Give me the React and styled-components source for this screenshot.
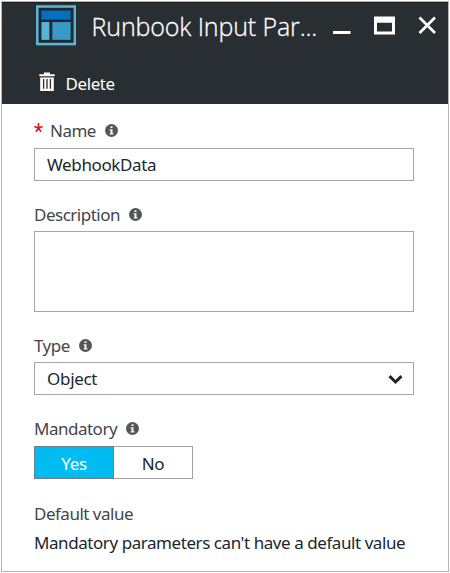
import React from "react";
import styled, { createGlobalStyle } from "styled-components";

const GlobalStyle = createGlobalStyle`
  * { box-sizing: border-box; }
  body { margin: 0; background: #fff; font-family: "Noto Sans", "Open Sans", sans-serif; }
`;

const Blade = styled.main`
  width: 448px;
  height: 571px;
  margin: 1px;
  border: 1px solid #b4b5b6;
  background: #fff;
`;

const Header = styled.header`
  height: 102px;
  background: #292e32;
  border-top: 1px solid #1b1f22;
  color: #fff;
`;

const TitleBar = styled.div`
  display: flex;
  height: 54px;
  padding: 2px 8px 0 33.5px;
`;

const Title = styled.h1`
  width: 243px;
  margin: 1px 0 0 15.5px;
  font: 300 25px/40px "Open Sans", sans-serif;
  letter-spacing: ${(p) => p.$spacing}px;
  -webkit-text-stroke: 0.3px #fff;
  white-space: nowrap;
`;

const Controls = styled.div`
  display: flex;
  padding-top: 9px;
`;

const Toolbar = styled.div`
  display: flex;
  padding: 15px 0 0 37px;
`;

const Text = styled.span`
  font-size: ${(p) => p.$size || 17}px;
  line-height: 24px;
  letter-spacing: ${(p) => p.$spacing ?? -0.5}px;
  color: ${(p) => p.$color || "#434649"};
  white-space: nowrap;
`;

const ToolbarButton = styled.div`
  display: flex;
  gap: 10.5px;
`;

const Form = styled.div`
  padding: 15px 0 0 32px;
`;

const Field = styled.section`
  height: ${(p) => p.$height}px;
`;

const Label = styled.div`
  display: flex;
  height: ${(p) => p.$height || 29}px;
`;

const Required = styled.svg`
  width: 9px;
  height: 10px;
  margin: 4px 7px 0 0;
`;

const Box = styled.div`
  display: flex;
  justify-content: space-between;
  width: 380px;
  height: ${(p) => p.$height || 33}px;
  padding: 4px 12px 0;
  border: 1px solid #a5a6a7;
`;

const Toggle = styled.div`
  display: flex;
  width: 159px;
  height: 33px;
  border: 1px solid #a0a1a2;
`;

const Choice = styled.div`
  flex: 1;
  padding-top: 5px;
  text-align: center;
  background: ${(p) => (p.$active ? "#00bcf2" : "#fff")};
  ${(p) => p.$active && "margin: -1px 0 -1px -1px; border: 1px solid #6d7f87;"}
`;

const InfoSvg = styled.svg`
  width: 13px;
  height: 13px;
  margin: 5px 0 0 9px;
  flex: none;
`;

const Info = () => (
  <InfoSvg viewBox="0 0 13 13">
    <circle cx="6.5" cy="6.5" r="6.5" fill="#53575b" />
    <path d="M5.5 2.3h2v1.8h-2zM4.7 5.3h2.8v4h.9v1.2H4.7V9.3h.8V6.4h-.8z" fill="#f5f5f5" />
  </InfoSvg>
);

const RunbookIcon = () => (
  <svg width="41" height="41" viewBox="0 0 41 41">
    <rect x="1.3" y="1.3" width="38" height="38" fill="#23292e" stroke="#59b4d9" strokeWidth="2.6" />
    <rect x="5.5" y="5.5" width="29.5" height="9" fill="#0072c6" />
    <rect x="5.5" y="17" width="8" height="18" fill="#59b4d9" />
    <rect x="16.5" y="17" width="18.5" height="18" fill="#3999c6" />
  </svg>
);

const TrashIcon = () => (
  <svg width="16" height="20" viewBox="0 0 16 20">
    <path d="M.3 2.2h4.6V.6h6v1.6h4.8v2.1H.3zM1.2 5.4h13.6V19H1.2z" fill="#fff" />
    <path d="M4.6 7v9.8M8 7v9.8M11.4 7v9.8" stroke="#292e32" strokeWidth="1.3" />
  </svg>
);

const WindowIcons = () => (
  <svg width="108" height="24" viewBox="0 0 108 24">
    <path d="M1 18.5h17.5" stroke="#fff" strokeWidth="3" />
    <path fillRule="evenodd" d="M42 2.5h21v18H42zM45 8.7v8.8h15V8.7z" fill="#fff" />
    <path d="M87.5 3.5l15.5 15.5M103 3.5L87.5 19" stroke="#fff" strokeWidth="2.7" />
  </svg>
);

const Chevron = styled.svg`
  width: 15px;
  height: 11px;
  margin: 7px -2px 0 0;
`;

export default function App() {
  return (
    <>
      <GlobalStyle />
      <Blade>
        <Header>
          <TitleBar>
            <RunbookIcon />
            <Title $spacing={-0.13}>Runbook Input Par...</Title>
            <Controls><WindowIcons /></Controls>
          </TitleBar>
          <Toolbar>
            <ToolbarButton>
              <TrashIcon />
              <Text $color="#fff" $spacing={-0.4}>Delete</Text>
            </ToolbarButton>
          </Toolbar>
        </Header>
        <Form>
          <Field $height={84}>
            <Label>
              <Required viewBox="0 0 8 9">
                <path d="M4 0v4.5M4 4.5L.3 3.2M4 4.5l3.7-1.3M4 4.5L1.7 8M4 4.5L6.3 8" stroke="#e81123" strokeWidth="1.5" />
              </Required>
              <Text>Name</Text>
              <Info />
            </Label>
            <Box><Text $color="#20262d" $spacing={-0.37}>WebhookData</Text></Box>
          </Field>
          <Field $height={131}>
            <Label $height={28}><Text>Description</Text><Info /></Label>
            <Box $height={81} />
          </Field>
          <Field $height={83}>
            <Label $height={28}><Text>Type</Text><Info /></Label>
            <Box>
              <Text $color="#20262d" $spacing={-0.3}>Object</Text>
              <Chevron viewBox="0 0 15 11">
                <path d="M1.5 2.2l6 5.8 6-5.8" fill="none" stroke="#20262d" strokeWidth="3" />
              </Chevron>
            </Box>
          </Field>
          <Field $height={85}>
            <Label><Text>Mandatory</Text><Info /></Label>
            <Toggle>
              <Choice $active><Text $color="#fff" $spacing={-0.3}>Yes</Text></Choice>
              <Choice><Text $color="#20262d" $spacing={-0.3}>No</Text></Choice>
            </Toggle>
          </Field>
          <Label><Text>Default value</Text></Label>
          <Text $color="#20262d" $spacing={-0.435}>Mandatory parameters can't have a default value</Text>
        </Form>
      </Blade>
    </>
  );
}
